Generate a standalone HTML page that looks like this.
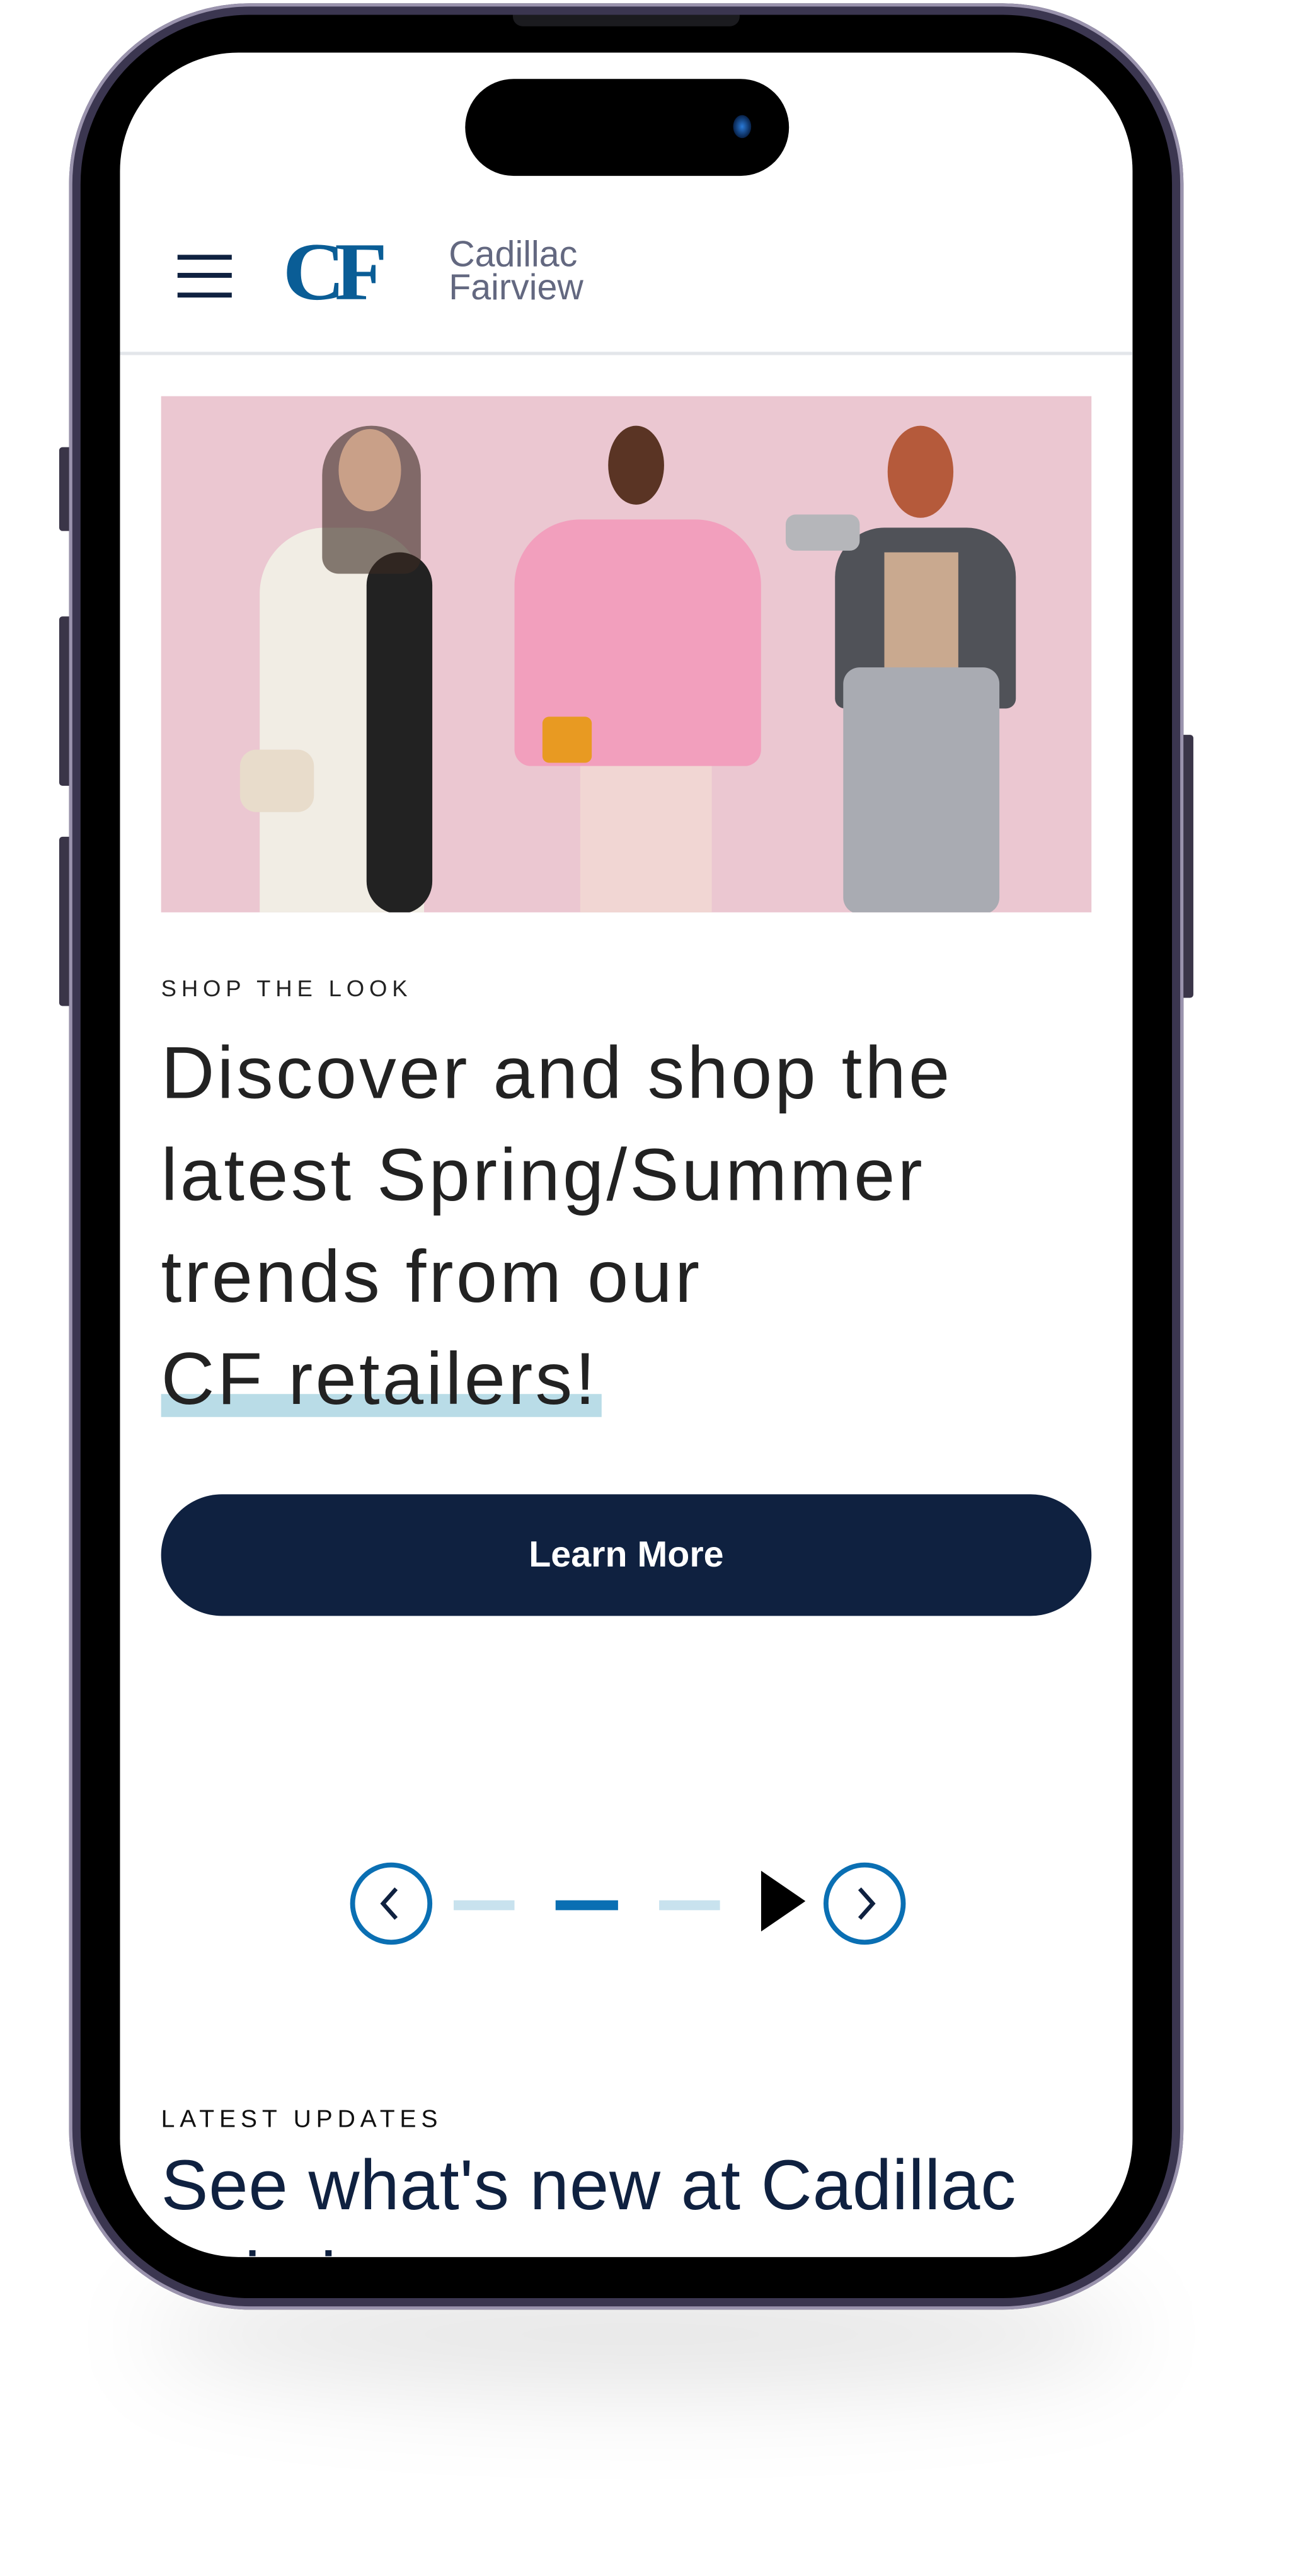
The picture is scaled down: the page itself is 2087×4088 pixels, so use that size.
<!DOCTYPE html>
<html><head><meta charset="utf-8"><style>
html,body{margin:0;padding:0;background:#fff;}
body{width:2087px;height:4088px;overflow:hidden;position:relative;}
#s{position:absolute;left:0;top:0;width:800px;height:1567px;transform:scale(2.60875);transform-origin:0 0;font-family:"Liberation Sans",sans-serif;}
.a{position:absolute;}
</style></head><body><div id="s">
<div class="a" style="left:90px;top:1385px;width:600px;height:70px;border-radius:50%;background:rgba(0,0,0,0.10);filter:blur(28px);"></div>
<div class="a" style="left:36px;top:272px;width:8px;height:51px;background:#3a3548;border-radius:2px;"></div>
<div class="a" style="left:36px;top:375px;width:8px;height:103px;background:#3a3548;border-radius:2px;"></div>
<div class="a" style="left:36px;top:509px;width:8px;height:103px;background:#3a3548;border-radius:2px;"></div>
<div class="a" style="left:718px;top:447px;width:8px;height:160px;background:#3a3548;border-radius:2px;"></div>
<div class="a" style="left:42px;top:2px;width:678px;height:1403px;border-radius:110px;background:#3b3650;box-shadow:inset 0 0 0 2px #9a93ad;"></div>
<div class="a" style="left:49px;top:9px;width:664px;height:1389px;border-radius:103px;background:#000;"></div>
<div class="a" style="left:312px;top:9px;width:138px;height:7px;border-radius:0 0 6px 6px;background:#1b1b1f;"></div>
<div class="a" style="left:73px;top:32px;width:616px;height:1341px;border-radius:72px;background:#fff;overflow:hidden;">
 <div class="a" style="left:210px;top:16px;width:197px;height:59px;border-radius:30px;background:#000;"></div>
 <div class="a" style="left:373px;top:38px;width:11px;height:14px;border-radius:50%;background:radial-gradient(#2a7ad8,#08224a 70%,#000);"></div>
 <div class="a" style="left:35px;top:123px;width:33px;height:3px;background:#0f2140;"></div>
 <div class="a" style="left:35px;top:134px;width:33px;height:3px;background:#0f2140;"></div>
 <div class="a" style="left:35px;top:146px;width:33px;height:3px;background:#0f2140;"></div>
 <div class="a" style="left:99px;top:110px;font-family:'Liberation Serif',serif;font-weight:bold;font-size:50px;line-height:46px;color:#0a5d96;letter-spacing:-6px;transform:scaleX(1.05);transform-origin:0 0;">CF</div>
 <div class="a" style="left:200px;top:113px;font-size:22px;line-height:20px;color:#636880;">Cadillac<br>Fairview</div>
 <div class="a" style="left:0;top:182px;width:616px;height:2px;background:#e3e6ea;"></div>
 <div class="a" style="left:25px;top:209px;width:566px;height:314px;background:#ebc7d1;overflow:hidden;">
  <div class="a" style="left:60px;top:80px;width:100px;height:240px;background:#f1ede4;border-radius:40px 40px 0 0;"></div>
  <div class="a" style="left:125px;top:95px;width:40px;height:220px;background:#222;border-radius:20px;"></div>
  <div class="a" style="left:98px;top:18px;width:60px;height:90px;background:#3b2a22;border-radius:30px 30px 10px 10px;opacity:.6"></div>
  <div class="a" style="left:108px;top:20px;width:38px;height:50px;background:#c9a088;border-radius:50%;"></div>
  <div class="a" style="left:48px;top:215px;width:45px;height:38px;background:#e8dccb;border-radius:10px;"></div>
  <div class="a" style="left:215px;top:75px;width:150px;height:150px;background:#f29fbd;border-radius:40px 40px 10px 10px;"></div>
  <div class="a" style="left:255px;top:225px;width:80px;height:95px;background:#f1d6d3;"></div>
  <div class="a" style="left:272px;top:18px;width:34px;height:48px;background:#5a3424;border-radius:50%;"></div>
  <div class="a" style="left:232px;top:195px;width:30px;height:28px;background:#e89a22;border-radius:4px;"></div>
  <div class="a" style="left:410px;top:80px;width:110px;height:110px;background:#505258;border-radius:30px 30px 6px 6px;"></div>
  <div class="a" style="left:440px;top:95px;width:45px;height:90px;background:#c9a98f;"></div>
  <div class="a" style="left:415px;top:165px;width:95px;height:150px;background:#a9abb2;border-radius:10px;"></div>
  <div class="a" style="left:442px;top:18px;width:40px;height:56px;background:#b55a3b;border-radius:50%;"></div>
  <div class="a" style="left:380px;top:72px;width:45px;height:22px;background:#b5b6ba;border-radius:6px;"></div>
 </div>
 <div class="a" style="left:25px;top:561px;font-size:14px;letter-spacing:3px;color:#222;">SHOP THE LOOK</div>
 <div class="a" style="left:25px;top:816px;width:268px;height:14px;background:#b9dce7;"></div>
 <div class="a" style="left:25px;top:590px;font-size:45px;line-height:62px;color:#222;white-space:nowrap;letter-spacing:1.6px;">Discover and shop the<br>latest Spring/Summer<br>trends from our<br>CF retailers!</div>
 <div class="a" style="left:25px;top:877px;width:566px;height:74px;border-radius:37px;background:#0f2140;color:#fff;font-weight:bold;font-size:22px;line-height:74px;text-align:center;">Learn More</div>
 <div class="a" style="left:140px;top:1101px;width:44px;height:44px;border:3px solid #0a6fb3;border-radius:50%;"></div>
 <svg class="a" style="left:152px;top:1113px" width="26" height="26" viewBox="0 0 26 26"><path d="M16 4 L8 13 L16 22" fill="none" stroke="#0f2140" stroke-width="2.5"/></svg>
 <div class="a" style="left:203px;top:1124px;width:37px;height:6px;background:#c8e2ee;"></div>
 <div class="a" style="left:265px;top:1124px;width:38px;height:6px;background:#0a6fb3;"></div>
 <div class="a" style="left:328px;top:1124px;width:37px;height:6px;background:#c8e2ee;"></div>
 <svg class="a" style="left:390px;top:1106px" width="27" height="37"><path d="M0 0 L27 18.5 L0 37Z" fill="#000"/></svg>
 <div class="a" style="left:428px;top:1101px;width:44px;height:44px;border:3px solid #0a6fb3;border-radius:50%;"></div>
 <svg class="a" style="left:440px;top:1113px" width="26" height="26" viewBox="0 0 26 26"><path d="M10 4 L18 13 L10 22" fill="none" stroke="#0f2140" stroke-width="2.5"/></svg>
 <div class="a" style="left:25px;top:1249px;font-size:15px;letter-spacing:3px;color:#111;">LATEST UPDATES</div>
 <div class="a" style="left:25px;top:1270px;font-size:43px;line-height:56px;color:#0f2140;white-space:nowrap;letter-spacing:0.3px;">See what's new at Cadillac<br>Fairview</div>
</div>
</div></body></html>
